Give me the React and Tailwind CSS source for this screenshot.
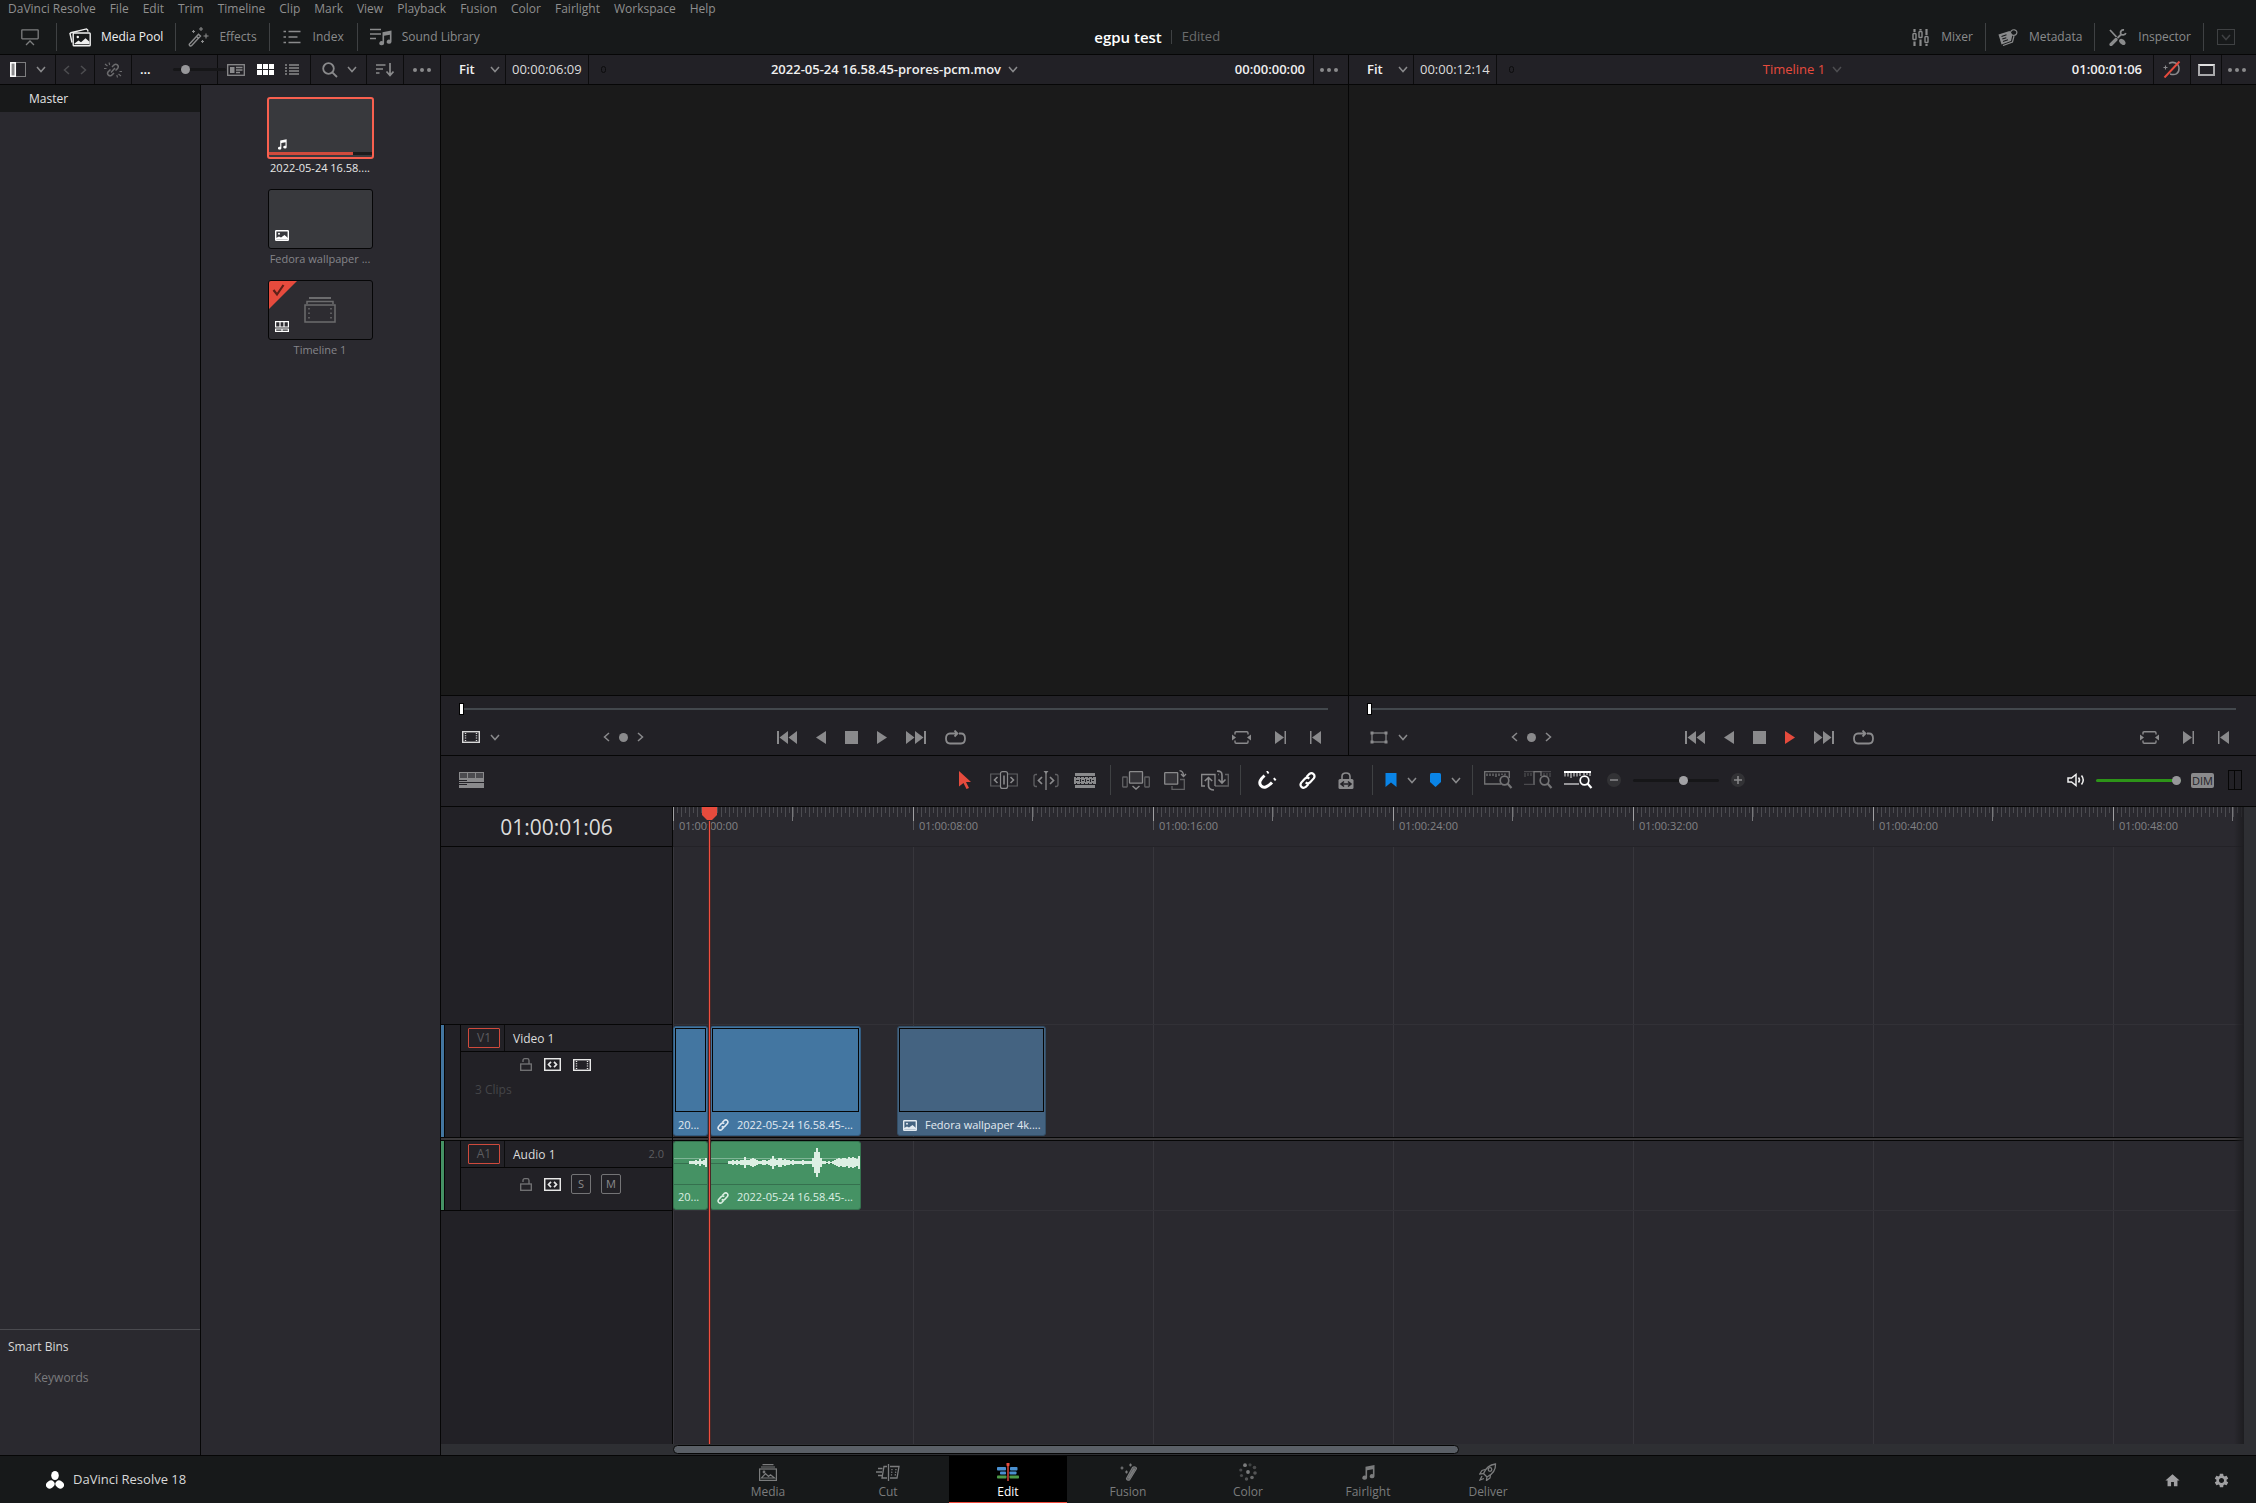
import React from 'react'
import { MdHome, MdSettings } from 'react-icons/md'
import clsx from 'clsx'

const MENU = [
  'DaVinci Resolve', 'File', 'Edit', 'Trim', 'Timeline', 'Clip', 'Mark', 'View',
  'Playback', 'Fusion', 'Color', 'Fairlight', 'Workspace', 'Help',
]

const RULER = [
  '01:00:00:00', '01:00:08:00', '01:00:16:00', '01:00:24:00',
  '01:00:32:00', '01:00:40:00', '01:00:48:00',
]

// half heights of the waveform, one value per 2px column
const WAVE_SHORT = [1, 1, 1, 2, 1, 3, 1, 2, 4]
const WAVE_LONG = [
  1, 1, 2, 1, 2, 1, 2, 2, 5, 2, 2, 3, 4, 3, 2, 1, 1, 2, 2, 1, 2, 3, 6, 3, 2,
  4, 4, 2, 3, 2, 2, 1, 2, 1, 1, 1, 1, 2, 1, 1, 1, 1, 4, 10, 14, 10, 4, 1, 1, 0, 1, 0, 1,
  2, 3, 4, 3, 4, 4, 3, 5, 4, 5, 4, 3, 6,
]

/* ---------- icons ---------- */

function Svg({ w, h, className, children, sw = 1.5, fill = 'none' }) {
  return (
    <svg
      width={w}
      height={h}
      viewBox={`0 0 ${w} ${h}`}
      fill={fill}
      stroke={fill === 'none' ? 'currentColor' : 'none'}
      strokeWidth={sw}
      className={clsx('shrink-0', className)}
      aria-hidden="true"
    >
      {children}
    </svg>
  )
}

const Chevron = ({ className }) => (
  <Svg w={10} h={7} className={className}><path d="M1 1l4 4.5L9 1" /></Svg>
)

const Less = ({ className }) => (
  <Svg w={7} h={10} className={className}><path d="M6 1L1.5 5 6 9" /></Svg>
)

const Greater = ({ className }) => (
  <Svg w={7} h={10} className={className}><path d="M1 1l4.5 4L1 9" /></Svg>
)

const Dots = () => (
  <Svg w={18} h={4} fill="currentColor">
    <circle cx="2" cy="2" r="2" /><circle cx="9" cy="2" r="2" /><circle cx="16" cy="2" r="2" />
  </Svg>
)

const PresentIcon = () => (
  <Svg w={18} h={17} sw={1.3}>
    <rect x="0.8" y="0.8" width="16.4" height="9" rx="0.5" />
    <path d="M5 16l4-4 4 4" />
  </Svg>
)

const MediaPoolIcon = () => (
  <Svg w={22} h={19} sw={1.4}>
    <path d="M3 14.5L1 5.500l1-.8L17.500 .9l1.200 1.100 .3 1.700" />
    <rect x="4.2" y="5" width="17" height="12.8" rx="0.8" />
    <circle cx="8.8" cy="9" r="1.2" fill="currentColor" stroke="none" />
    <path d="M5.5 15.5l4-3 2.500 1.700 4.500-4 4 3.500v2.500h-15z" fill="currentColor" stroke="none" />
  </Svg>
)

const EffectsIcon = () => (
  <Svg w={21} h={20} sw={1.4}>
    <path d="M1.500 17L10.500 7.200l2 1.800L3.500 18.800c-1 .8-3-.6-2-1.800z" />
    <path d="M8.500 9.500l2 1.800" />
    <path d="M13 0v4M11 2h4M18 6.500v5M15.500 9h5M5.500 3v3M4 4.500h3M14.500 13v3M13 14.500h3" strokeWidth="1.100" />
  </Svg>
)

const IndexIcon = () => (
  <Svg w={18} h={14} sw={1.6}>
    <path d="M0.500 1.500h2.500M5.500 1.500h12M0.500 7h2.500M5.500 7h9M0.500 12.500h2.500M5.500 12.500h12" />
  </Svg>
)

const Note = ({ w = 14, h = 15, className }) => (
  <svg width={w} height={h} viewBox="0 0 14 15" fill="currentColor" className={className} aria-hidden="true">
    <path d="M4.500 1.800L13.500 0v11.200a2.400 2 0 1 1-1.600-1.900V4.200L6.100 5.300v7.400a2.400 2 0 1 1-1.600-1.900z" />
  </svg>
)

const SoundIcon = () => (
  <span className="relative block h-[18px] w-[22px] shrink-0">
    <Svg w={12} h={12} sw={1.5} className="block"><path d="M0 1.500h11M0 6h11M0 10.500h6" /></Svg>
    <Note w={14} h={16} className="absolute right-0 bottom-0" />
  </span>
)

const MixerIcon = () => (
  <Svg w={17} h={17} sw={1.4}>
    <path d="M2.500 0v3M2.500 12.500V17M8.500 0v1.500M8.500 10.500V17M14.500 0v6M14.500 15v2" strokeWidth="2.200" />
    <rect x="1" y="4.500" width="3" height="6" rx="0.800" />
    <rect x="7" y="2.500" width="3" height="6" rx="0.800" />
    <rect x="13" y="7.500" width="3" height="6" rx="0.800" />
  </Svg>
)

const MetadataIcon = () => (
  <Svg w={20} h={17} sw={1.2}>
    <path d="M0.500 5.500L11.500 2l3 3.500L13 12 3.500 15.500z" fill="currentColor" stroke="none" />
    <path d="M3.500 7.500l5-1.700M4.300 10l4-1.300M5 12.500l5-1.700" stroke="#17191a" strokeWidth="1.100" />
    <path d="M5 16.500l9.500-3.500 1.500-6" />
    <path d="M12 5.500c0-3 2-5 4.500-4.700s3 3.200 1.500 4.700-3.500 1-4 .2" />
  </Svg>
)

const InspectorIcon = () => (
  <Svg w={18} h={17} sw={1.8}>
    <path d="M1 1l6.500 7" />
    <path d="M10.500 10.500c1.500-1.500 3-.8 4.500 .5 1.500 1.400 2.200 3.500 1 4.600-1.200 1-3.200 .4-4.500-1-1.200-1.400-2.200-2.800-1-4.100z" fill="currentColor" stroke="none" />
    <path d="M2 15.500l5-5" strokeWidth="3.200" strokeLinecap="round" />
    <path d="M8.500 9l3.500-3.500" />
    <path d="M15 1c-2.300-.4-4 1.300-3.200 3.600 .9 1.900 4.200 1.900 5-.6" />
  </Svg>
)

const UnlinkIcon = () => (
  <Svg w={18} h={16} sw={1.5}>
    <path d="M8 5l2.200-2.200c2-1.600 5.200 .8 3.600 3.400L11.500 8.500M10 11l-2.500 2.300c-2 1.500-5-.8-3.500-3.300L6.500 7.500M7 10.500l4-4.500" />
    <path d="M5 0.500l.7 2.500M1 2l2.500 2M0 6.500h2.500M13.500 15.500l-.7-2.500M17 14l-2.500-2M18 9.500h-2.500" strokeWidth="1.100" />
  </Svg>
)

const MetaViewIcon = () => (
  <Svg w={18} h={12} sw={1.3}>
    <rect x="0.7" y="0.7" width="16.6" height="10.6" />
    <rect x="3" y="3" width="4.5" height="6" fill="currentColor" stroke="none" />
    <path d="M9 3.500h6.500M9 6h6.500M9 8.500h4" />
  </Svg>
)

const GridIcon = () => (
  <Svg w={17} h={11} fill="currentColor">
    <path d="M0 0h5v5H0zM6 0h5v5H6zM12 0h5v5h-5zM0 6h5v5H0zM6 6h5v5H6zM12 6h5v5h-5z" />
  </Svg>
)

const ListIcon = () => (
  <Svg w={14} h={11} sw={1.3}>
    <path d="M0 1h2M4 1h10M0 4h2M4 4h10M0 7h2M4 7h10M0 10h2M4 10h10" />
  </Svg>
)

const SearchIcon = () => (
  <Svg w={16} h={16} sw={1.8}>
    <circle cx="6.5" cy="6.5" r="5.3" /><path d="M10.300 10.300l4.700 4.700" />
  </Svg>
)

const SortIcon = () => (
  <Svg w={18} h={14} sw={1.7}>
    <path d="M0 2h9.500M0 6h7M0 10h3.500M14 0v12M10.500 8.500l3.500 4 3.500-4" />
  </Svg>
)

const SidebarIcon = () => (
  <Svg w={16} h={15} sw={1}>
    <rect x="0.5" y="0.5" width="15" height="14" stroke="#7d7d7f" />
    <rect x="0.8" y="0.8" width="4.5" height="13.4" fill="#8a8a8c" stroke="#fff" strokeWidth="1.5" />
  </Svg>
)

const PictureIcon = ({ className }) => (
  <Svg w={14} h={11} sw={1.4} className={className}>
    <rect x="0.7" y="0.7" width="12.6" height="9.6" rx="0.5" />
    <circle cx="4" cy="3.8" r="1" fill="currentColor" stroke="none" />
    <path d="M1 9.500V8l3-1.500 2 1 3.500-2.500L13 8v1.500z" fill="currentColor" stroke="none" />
  </Svg>
)

const FilmIcon = () => (
  <Svg w={18} h={12} sw={1.4}>
    <rect x="0.7" y="0.7" width="16.6" height="10.6" />
    <path d="M3.500 2v8M14.500 2v8" strokeDasharray="1 1.3" />
  </Svg>
)

const FrameIcon = () => (
  <Svg w={18} h={13} sw={1.2}>
    <rect x="2" y="2" width="14" height="9" />
    <path d="M.5 .5h3v3h-3zM14.500 .5h3v3h-3zM.5 9.500h3v3h-3zM14.500 9.500h3v3h-3z" fill="currentColor" stroke="none" />
  </Svg>
)

const LoopIcon = () => (
  <Svg w={21} h={15} sw={1.8}>
    <path d="M7 3.500H5C2.500 3.500 1 5.500 1 8.500s1.500 5 4 5h11c2.500 0 4-2 4-5s-1.500-5-4-5h-2" />
    <path d="M7 3.500h5M9.500 .5l3 3-3 3" />
  </Svg>
)

const FirstIcon = () => (
  <Svg w={20} h={13} fill="currentColor"><path d="M0 0h2v13H0zM11 0v13L2.500 6.500zM20 0v13l-8.500-6.500z" /></Svg>
)
const LastIcon = () => (
  <Svg w={20} h={13} fill="currentColor"><path d="M18 0h2v13h-2zM9 0v13l8.500-6.500zM0 0v13l8.500-6.500z" transform="translate(0 0)" /></Svg>
)
const PlayIcon = () => <Svg w={10} h={13} fill="currentColor"><path d="M0 0l10 6.500L0 13z" /></Svg>
const ReverseIcon = () => <Svg w={10} h={13} fill="currentColor"><path d="M10 0v13L0 6.500z" /></Svg>
const StopIcon = () => <Svg w={13} h={13} fill="currentColor"><path d="M0 0h13v13H0z" /></Svg>
const MarkInIcon = () => <Svg w={11} h={13} fill="currentColor"><path d="M9.500 0H11v13H9.500zM0 0l9 6.500L0 13z" /></Svg>
const MarkOutIcon = () => <Svg w={11} h={13} fill="currentColor"><path d="M0 0h1.500v13H0zM11 0v13L2 6.500z" /></Svg>
const MatchIcon = () => (
  <Svg w={19} h={13} sw={1.4}>
    <path d="M3 3.500V2q0-1.200 1.200-1.200h10.600Q16 .8 16 2v1.500M3 9.500V11q0 1.200 1.200 1.200h10.600Q16 12.200 16 11V9.500" />
    <path d="M0 3.500l4 3-4 3zM19 3.500l-4 3 4 3z" fill="currentColor" stroke="none" />
  </Svg>
)

const NoGradeIcon = () => (
  <Svg w={18} h={17} sw={1.5}>
    <path d="M6 2.500c4-2.500 10-.5 10 5s-4 7-9 5.500" />
    <path d="M2.500 4.500v4M.5 6.500h4" strokeWidth="1.100" />
    <path d="M1.500 16.500L16.500 .5" stroke="#e64b3d" strokeWidth="2" />
  </Svg>
)

const TimelineViewIcon = () => (
  <Svg w={25} h={16} fill="currentColor">
    <path d="M0 0h25v10H0zM0 11h25v5H0z" />
    <path d="M1 1h7v5H1zM9 1h7v5H9zM17 1h7v5h-7z" fill="#4b4b4f" />
    <path d="M0 8h8v1H0zM0 12h8v1H0z" fill="#222126" />
  </Svg>
)

const ArrowIcon = () => <Svg w={12} h={18} fill="currentColor"><path d="M0 0l12 11H7l3 6-2.500 1-3-6L0 15.500z" /></Svg>

const TrimIcon = () => (
  <Svg w={28} h={18} sw={1.2}>
    <path d="M10 3H.7v12H10M18 3h9.300v12H18" className="opacity-60" />
    <rect x="10.5" y="0.6" width="7" height="16.8" rx="2" />
    <path d="M14 4.500v9" strokeWidth="1.600" />
    <path d="M7.500 6L4.500 9l3 3M20.500 6l3 3-3 3" strokeWidth="1.600" />
  </Svg>
)

const DynamicTrimIcon = () => (
  <Svg w={26} h={19} sw={1.3}>
    <path d="M4 3.500H3Q1 3.500 1 5.500v8q0 2 2 2h1M22 3.500h1q2 0 2 2v8q0 2-2 2h-1" className="opacity-60" />
    <path d="M13 1v18" />
    <path d="M10.500 0h5L13 3z" fill="currentColor" stroke="none" />
    <path d="M9 6L5.500 9.500 9 13M17 6l3.500 3.500L17 13" strokeWidth="1.700" />
  </Svg>
)

const BladeIcon = () => (
  <Svg w={22} h={15} fill="currentColor">
    <path d="M1 0h20v3H1zM1 12h20v3H1zM0 4h22v7H0z" />
    <path d="M2 4h1v1H2zM6 4h1v1H6zM10 4h1v1h-1zM14 4h1v1h-1zM18 4h1v1h-1zM2 10h1v1H2zM6 10h1v1H6zM10 10h1v1h-1zM14 10h1v1h-1zM18 10h1v1h-1z" fill="#222126" />
    <path d="M2 7h3v1H2zM6 6h1v3H6zM8 7h2v1H8zM11 6h1v3h-1zM13 7h2v1h-2zM16 6h1v3h-1zM18 7h2v1h-2z" fill="#222126" />
  </Svg>
)

const InsertIcon = () => (
  <Svg w={28} h={19} sw={1.3}>
    <rect x="0.7" y="6" width="4.5" height="10" rx="0.5" className="opacity-60" />
    <rect x="22.8" y="6" width="4.5" height="10" rx="0.5" className="opacity-60" />
    <rect x="7.5" y="0.7" width="13" height="11.5" rx="0.5" fill="#343338" />
    <path d="M10.500 15l3.500 3 3.500-3" strokeWidth="1.500" />
  </Svg>
)

const OverwriteIcon = () => (
  <Svg w={23} h={20} sw={1.3}>
    <path d="M16 9.500h4.300v9.800H8V16" className="opacity-60" />
    <rect x="0.7" y="2.7" width="13" height="11.5" rx="0.5" fill="#343338" />
    <path d="M15.500 .7q4 .3 4 5.500M17 4l2.500 2.500L22 4" />
  </Svg>
)

const ReplaceIcon = () => (
  <Svg w={28} h={21} sw={1.3}>
    <path d="M4 16H.7V4.500H14V16" />
    <path d="M17 4.500h1M24 4.500h3.300V16H14" className="opacity-60" />
    <path d="M7.500 8.500v8q1 3.500 5.500 3.500M3.800 11l3.700-3.500L11.200 11" strokeWidth="1.600" />
    <path d="M16 1.200q5-.5 5 4v7M17.500 9.500l3.500 3.500 3.500-3.500" strokeWidth="1.600" />
  </Svg>
)

const MagnetIcon = () => (
  <Svg w={19} h={18} sw={3}>
    <path d="M6.500 4.500C2 8.500 .5 12 3 14.800s6.500 1.400 11-3.300" />
    <path d="M9 1.800l1.500-1M16 8.800l1.500-1.200" />
  </Svg>
)

const LinkIcon = ({ size = 17, className }) => (
  <svg width={size} height={size} viewBox="0 0 17 17" fill="none" stroke="currentColor" strokeWidth="2.200" className={clsx('shrink-0', className)} aria-hidden="true">
    <path d="M7.500 5l2.700-2.900q2.400-1.800 4.300 0t.2 4.300l-3.700 4q-2.200 1.900-4.300 0" />
    <path d="M9.500 12l-2.700 2.900q-2.400 1.800-4.300 0t-.2-4.300l3.700-4q2.200-1.900 4.300 0" />
  </svg>
)

const LockArrowIcon = () => (
  <Svg w={16} h={17} sw={1.6}>
    <path d="M4 7V4.500Q4 1 8 1t4 3.500V7" />
    <rect x="0.5" y="7" width="15" height="10" rx="1.5" fill="currentColor" stroke="none" />
    <path d="M3.500 12h9M6 9.500L3 12l3 2.500M10 9.500l3 2.500-3 2.500" stroke="#222126" />
  </Svg>
)

const FlagIcon = () => <Svg w={12} h={14} fill="#0a84e6"><path d="M.5 0h11v14L6 9.500 .5 14z" /></Svg>
const MarkerIcon = () => <Svg w={11} h={14} fill="#0a84e6"><path d="M1.500 0h8Q11 0 11 1.500V9l-5.500 5L0 9V1.500Q0 0 1.500 0z" /></Svg>

function ZoomIcon({ variant }) {
  return (
    <Svg w={29} h={18} sw={1.3}>
      {variant === 'full' && <path d="M17 13H.7V.7h24.600V7" />}
      {variant === 'full' && <path d="M3 5V2.500M6 5V2.500M9 5V2.500M12 6V2.500M15 5V2.500M18 4V2.500M21 4V2.500" />}
      {variant === 'detail' && <path d="M10 14V.7h7V5" />}
      {variant === 'detail' && <path d="M0 .7h27M1 6V2M4 5V2M7 5V2M20 5V2M23 5V2M26 6V2M0 13.300h9" className="opacity-50" />}
      {variant === 'custom' && <path d="M0 1h27" strokeWidth="2" />}
      {variant === 'custom' && <path d="M1 5.500V2M4 5.500V2M7 7V2M10 5.500V2M13 5.500V2M16 5V2M20 4V2M23 4V2M26 5V2M0 13h15" className="opacity-70" />}
      <circle cx="20.5" cy="9.5" r="4.3" fill="#222126" strokeWidth="1.700" />
      <path d="M23.500 12.500l4 4.500" strokeWidth="2.200" />
    </Svg>
  )
}

const SpeakerIcon = () => (
  <Svg w={19} h={14} sw={1.5}>
    <path d="M1 5v4h3.500L9 12.500v-11L4.500 5z" />
    <path d="M11.500 4.500q2 2.500 0 5M14.500 2.500q3.500 4.500 0 9" />
  </Svg>
)

const UnlockIcon = () => (
  <Svg w={12} h={13} sw={1.3}>
    <rect x="0.7" y="6" width="10.6" height="6.3" /><path d="M3 4V2.500Q3 .7 4.800 .7h2.400Q9 .7 9 2.500V6" />
  </Svg>
)

const AutoSelectIcon = () => (
  <Svg w={17} h={13} sw={1.5}>
    <rect x="0.7" y="0.7" width="15.6" height="11.6" />
    <path d="M7 3.800L4.500 6.500 7 9.200M10 3.800l2.500 2.700L10 9.200" strokeWidth="1.700" />
  </Svg>
)

const TimelineStackIcon = () => (
  <Svg w={32} h={26} sw={1.5}>
    <path d="M5 1h22" strokeWidth="2" /><path d="M3 7V4.500h26V7" />
    <rect x="1" y="8" width="30" height="17" />
    <path d="M5 11v12M27 11v12" strokeDasharray="1.5 3" />
  </Svg>
)

const TimelineBadgeIcon = ({ className }) => (
  <Svg w={14} h={11} sw={1.2} className={className}>
    <path d="M.6 .6h12.800v5.400H.6zM5 .6V6M9 .6V6M.6 8h12.800v2.400H.6zM7 8v2.400" />
  </Svg>
)

const ResolveLogo = () => (
  <Svg w={18} h={18} fill="#fff">
    <ellipse cx="9" cy="4.5" rx="3.8" ry="4.5" />
    <ellipse cx="4.3" cy="13.5" rx="4.5" ry="3.7" transform="rotate(-35 4.3 13.5)" />
    <ellipse cx="13.7" cy="13.5" rx="4.5" ry="3.7" transform="rotate(35 13.7 13.5)" />
  </Svg>
)

const PAGE_ICONS = {
  Media: (
    <Svg w={18} h={17} sw={1.2}>
      <path d="M3.500 .6h11M2 3h14" /><rect x="0.6" y="5" width="16.8" height="11.4" />
      <path d="M2.500 14l4-4.500 3 3 2-1.800 4 3.300z" /><circle cx="5" cy="8" r="0.8" />
    </Svg>
  ),
  Cut: (
    <Svg w={24} h={17} sw={1.3}>
      <path d="M11 2.500H8L6 14H11M14 2.500h9L21 14H14M12.500 0v17" />
      <path d="M2 4.500h4.500M0 8h6M2 11.500h4" /><path d="M16 5l-.6 7M20 5l-.8 7" strokeDasharray="1.3 1.3" />
    </Svg>
  ),
  Edit: (
    <Svg w={22} h={18} fill="#4a90d0">
      <rect x="0" y="4" width="9" height="3.5" rx="0.8" /><rect x="13" y="4" width="7.5" height="3.5" rx="0.8" />
      <rect x="3" y="8.5" width="6" height="3" rx="0.8" /><rect x="12.5" y="8.5" width="7" height="3" rx="0.8" />
      <rect x="0" y="12.5" width="9.5" height="3" rx="0.8" fill="#4c9a48" /><rect x="12.5" y="12.5" width="9.5" height="3" rx="0.8" fill="#4c9a48" />
      <path d="M9.500 0h3v2.500l-.8 .8V18h-1.400V3.300l-.8-.8z" fill="#e64b3d" />
    </Svg>
  ),
  Fusion: (
    <Svg w={18} h={18} sw={1.2}>
      <path d="M7.500 15.500L13.500 4.500q1.500-1.500 3.500 0 .8 1 0 2L10.500 17q-2.500 .8-3-1.500z" fill="#555759" />
      <path d="M15.500 5.500L9.500 15.500" strokeWidth="1.800" />
      <path d="M3 3.500v3M1.500 5h3M7.500 7.500v3M6 9h3M11.500 .5v3M10 2h3" />
    </Svg>
  ),
  Color: (
    <Svg w={18} h={18} fill="currentColor">
      <circle cx="9" cy="9" r="1.9" /><circle cx="6" cy="2.2" r="1.9" /><circle cx="11" cy="1.8" r="1.6" className="opacity-40" />
      <circle cx="15.5" cy="4.5" r="1.8" className="opacity-50" /><circle cx="16" cy="10" r="1.8" className="opacity-60" />
      <circle cx="13" cy="14.5" r="1.8" className="opacity-80" /><circle cx="7.5" cy="16" r="1.7" className="opacity-60" />
      <circle cx="2.5" cy="12.5" r="1.6" className="opacity-50" /><circle cx="1.8" cy="7" r="1.6" className="opacity-50" />
    </Svg>
  ),
  Fairlight: <Note w={14} h={15} />,
  Deliver: (
    <Svg w={18} h={18} sw={1.3}>
      <path d="M4.500 10.500Q8 2 16.500 1q.5 8.500-8.500 13z" /><circle cx="11" cy="6.5" r="1.8" />
      <path d="M6 6.500L3 7.500 .7 11l3.500-.3M11.500 11.500L11 15l-3.500 2.500 .3-3.300M3 13l-2 4 4-1.500" />
    </Svg>
  ),
}

/* ---------- shared bits ---------- */

function IconButton({ label, className, children }) {
  return (
    <button type="button" aria-label={label} className={clsx('flex items-center justify-center shrink-0', className)}>
      {children}
    </button>
  )
}

const Rule = ({ className }) => <span className={clsx('w-px shrink-0 bg-[#3f4143]', className)} />

function HeaderButton({ icon, label, active, className }) {
  return (
    <button type="button" className={clsx('flex items-center', active ? 'text-[#f0f0f0]' : 'text-[#8a8b8c]', className)}>
      {icon}
      <span>{label}</span>
    </button>
  )
}

/* ---------- header ---------- */

function MenuBar() {
  return (
    <nav className="flex h-[18px] items-center gap-[14px] px-2 text-[#8f8f8f]">
      {MENU.map((item) => (
        <button type="button" key={item}>{item}</button>
      ))}
    </nav>
  )
}

function Header() {
  return (
    <header className="grid h-[37px] grid-cols-[1fr_auto_1fr] items-center border-b border-[#060606] pt-0.5">
      <div className="flex items-center">
        <IconButton label="Presentation" className="w-14 pl-1 text-[#7d7e7f]"><PresentIcon /></IconButton>
        <Rule className="h-7" />
        <HeaderButton icon={<MediaPoolIcon />} label="Media Pool" active className="gap-2.5 px-3" />
        <Rule className="h-7" />
        <HeaderButton icon={<EffectsIcon />} label="Effects" className="gap-2.5 px-3" />
        <Rule className="h-7" />
        <HeaderButton icon={<IndexIcon />} label="Index" className="gap-3 px-[13px]" />
        <Rule className="h-7" />
        <HeaderButton icon={<SoundIcon />} label="Sound Library" className="gap-2.5 px-3" />
      </div>
      <h1 className="text-[15px] font-semibold text-white">egpu test</h1>
      <div className="flex items-center">
        <Rule className="ml-[9px] h-[14px]" />
        <span className="ml-2.5 text-[13px] text-[#6a6b6c]">Edited</span>
        <HeaderButton icon={<MixerIcon />} label="Mixer" className="ml-auto gap-3 px-3" />
        <Rule className="h-7" />
        <HeaderButton icon={<MetadataIcon />} label="Metadata" className="gap-[11px] px-3" />
        <Rule className="h-7" />
        <HeaderButton icon={<InspectorIcon />} label="Inspector" className="gap-[11px] pl-[14px] pr-3" />
        <Rule className="h-7" />
        <IconButton label="More panels" className="ml-[13px] mr-[21px] h-4 w-[18px] border border-[#3f4143] text-[#3f4143]">
          <Chevron />
        </IconButton>
      </div>
    </header>
  )
}

/* ---------- media pool ---------- */

const cell = 'flex h-full shrink-0 items-center border-r border-[#0c0c0d]'

function MediaToolbar() {
  return (
    <div className="flex h-[30px] border-b border-[#060606] bg-[#222126] text-[#8a8a8c]">
      <div className={clsx(cell, 'w-14 gap-2.5 pl-2.5')}>
        <IconButton label="Toggle bins"><SidebarIcon /></IconButton>
        <IconButton label="Bin options"><Chevron /></IconButton>
      </div>
      <div className={clsx(cell, 'w-[39px] justify-center gap-2.5 text-[#4d4d50]')}>
        <IconButton label="Back"><Less /></IconButton>
        <IconButton label="Forward"><Greater /></IconButton>
      </div>
      <IconButton label="Unlink" className={clsx(cell, 'w-[37px] text-[#6c6c6e]')}><UnlinkIcon /></IconButton>
      <div className={clsx(cell, 'w-[86px] gap-[22px] pl-2')}>
        <span className="text-[13px] font-semibold text-white">...</span>
        <input
          type="range"
          aria-label="Thumbnail size"
          defaultValue={20}
          className="h-3 w-[53px] shrink-0 appearance-none bg-transparent [&::-webkit-slider-runnable-track]:h-[3px] [&::-webkit-slider-runnable-track]:rounded-full [&::-webkit-slider-runnable-track]:bg-[#161618] [&::-webkit-slider-thumb]:-mt-[3px] [&::-webkit-slider-thumb]:size-[9px] [&::-webkit-slider-thumb]:appearance-none [&::-webkit-slider-thumb]:rounded-full [&::-webkit-slider-thumb]:bg-[#97979a]"
        />
      </div>
      <div className={clsx(cell, 'w-[93px] justify-between pl-[9px] pr-[11px]')}>
        <IconButton label="Metadata view"><MetaViewIcon /></IconButton>
        <IconButton label="Thumbnail view" className="text-white"><GridIcon /></IconButton>
        <IconButton label="List view"><ListIcon /></IconButton>
      </div>
      <div className={clsx(cell, 'w-14 justify-between pl-[11px] pr-[9px]')}>
        <IconButton label="Search"><SearchIcon /></IconButton>
        <IconButton label="Search options"><Chevron /></IconButton>
      </div>
      <IconButton label="Sort" className={clsx(cell, 'w-[37px]')}><SortIcon /></IconButton>
      <IconButton label="Media pool options" className="w-9"><Dots /></IconButton>
    </div>
  )
}

function Thumb({ label, selected, children }) {
  return (
    <figure className="flex h-[91px] flex-col items-center">
      <div className="flex h-[62px] items-center">
        <div
          className={clsx(
            'relative flex items-center justify-center overflow-hidden rounded-[3px]',
            selected ? 'h-[62px] w-[107px] border-2 border-[#f9604f]' : 'h-[60px] w-[105px] border border-[#060607]',
            label === 'Timeline 1' ? 'bg-[#2d2c31]' : 'bg-[#38393d]',
          )}
        >
          {children}
        </div>
      </div>
      <figcaption className={clsx('mt-px text-[11px] leading-4', selected ? 'text-[#e8e8e8]' : 'text-[#85858a]')}>
        {label}
      </figcaption>
    </figure>
  )
}

function MediaPool() {
  return (
    <section className="flex w-[441px] shrink-0 flex-col border-r border-[#060606] bg-[#2a292f]">
      <MediaToolbar />
      <div className="flex min-h-0 flex-1">
        <aside className="flex w-[201px] shrink-0 flex-col border-r border-[#060606]">
          <button type="button" className="h-[27px] bg-[#18191a] pt-px pl-[29px] text-left text-[#e3e3e3]">Master</button>
          <div className="mt-auto h-[126px] border-t border-[#4a4a4f] pt-[7px]">
            <h2 className="pl-2 leading-5 text-[#d8d8d8]">Smart Bins</h2>
            <button type="button" className="mt-[11px] block pl-[34px] leading-5 text-[#7b7b7e]">Keywords</button>
          </div>
        </aside>
        <div className="flex-1 pt-3 pr-px">
          <Thumb label="2022-05-24 16.58...." selected>
            <Note w={10} h={11} className="absolute bottom-[7px] left-2 text-white" />
            <span className="absolute inset-x-0 bottom-0.5 flex h-[3px] bg-[#1b1b1c]">
              <span className="w-[82%] bg-[#d04a3c]" />
            </span>
          </Thumb>
          <Thumb label="Fedora wallpaper ...">
            <PictureIcon className="absolute bottom-[7px] left-1.5 text-white" />
          </Thumb>
          <Thumb label="Timeline 1">
            <Svg w={28} h={28} fill="#e64b3d" className="absolute top-0 left-0">
              <path d="M0 0h28L0 28z" />
              <path d="M4.500 9l3.500 4.500L14.500 4" fill="none" stroke="#5e2019" strokeWidth="2.200" />
            </Svg>
            <span className="text-[#6c6c6e]"><TimelineStackIcon /></span>
            <TimelineBadgeIcon className="absolute bottom-[7px] left-1.5 text-white" />
          </Thumb>
        </div>
      </div>
    </section>
  )
}

/* ---------- viewers ---------- */

function Viewer({ duration, title, timecode, timeline }) {
  return (
    <section className={clsx('flex min-w-0 flex-1 flex-col', !timeline && 'border-r border-[#060606]')}>
      <div className="grid h-[30px] shrink-0 grid-cols-[1fr_auto_1fr] border-b border-[#060606] bg-[#222126] text-[13px] text-[#8a8a8c]">
        <div className="flex items-center">
          <label className={clsx(cell, 'relative w-[65px]')}>
            <select aria-label="Viewer zoom" className="h-full w-full appearance-none bg-transparent pl-[18px] font-semibold text-[#f0f0f0]">
              <option>Fit</option>
            </select>
            <Chevron className="pointer-events-none absolute right-[5px]" />
          </label>
          <span className={clsx(cell, 'w-[83px] pl-1.5 text-[#dcdcdc]')}>{duration}</span>
          <span className="ml-3 h-[7px] w-[5px] rounded-full border border-[#0c0c0d]" />
        </div>
        <button
          type="button"
          className={clsx('flex items-center gap-[7px]', timeline ? 'font-medium text-[#e64b3d]' : 'font-semibold text-[#f0f0f0]')}
        >
          {title}
          <Chevron className={timeline ? 'text-[#4d4d50]' : 'text-[#8a8a8c]'} />
        </button>
        <div className="flex items-center justify-end">
          <span className={clsx(cell, 'pr-2 font-semibold text-[#f0f0f0]', timeline && 'pr-[11px]')}>{timecode}</span>
          {timeline && (
            <>
              <IconButton label="Bypass color grades" className={clsx(cell, 'w-[37px]')}><NoGradeIcon /></IconButton>
              <IconButton label="Single viewer" className={clsx(cell, 'w-[31px]')}>
                <span className="h-3 w-[17px] border-2 border-[#a9a9ab] border-t-[#e0e0e0]" />
              </IconButton>
            </>
          )}
          <IconButton label="Viewer options" className="w-[34px] pr-1"><Dots /></IconButton>
        </div>
      </div>
      <div className="h-[610px] bg-[#1a1a1a]" />
      <div className="h-[61px] border-y border-[#060606] bg-[#222126] pr-5 pl-[18px] text-[#8a8a8c]">
        <input
          type="range"
          aria-label="Scrub"
          defaultValue={0}
          className="mt-[7px] block h-3 w-full appearance-none bg-transparent [&::-webkit-slider-runnable-track]:h-0.5 [&::-webkit-slider-runnable-track]:bg-[#43484d] [&::-webkit-slider-thumb]:-mt-[5px] [&::-webkit-slider-thumb]:h-3 [&::-webkit-slider-thumb]:w-[5px] [&::-webkit-slider-thumb]:appearance-none [&::-webkit-slider-thumb]:border [&::-webkit-slider-thumb]:border-black [&::-webkit-slider-thumb]:bg-white"
        />
        <div className="mt-3 flex h-5 items-center pr-[7px] pl-[3px]">
          <IconButton label="Overlay mode" className={timeline ? '' : 'text-[#d8d8d8]'}>
            {timeline ? <FrameIcon /> : <FilmIcon />}
          </IconButton>
          <IconButton label="Overlay options" className="ml-2.5"><Chevron /></IconButton>
          <div className="ml-[103px] flex items-center gap-[9px]">
            <IconButton label="Previous marker"><Less /></IconButton>
            <IconButton label="Add marker" className="size-[9px] rounded-full bg-current" />
            <IconButton label="Next marker"><Greater /></IconButton>
          </div>
          <span className="flex-1" />
          <div className="flex items-center gap-[19px]">
            <IconButton label="First frame"><FirstIcon /></IconButton>
            <IconButton label="Play reverse"><ReverseIcon /></IconButton>
            <IconButton label="Stop"><StopIcon /></IconButton>
            <IconButton label="Play" className={timeline ? 'text-[#e64b3d]' : ''}><PlayIcon /></IconButton>
            <IconButton label="Last frame"><LastIcon /></IconButton>
            <IconButton label="Loop"><LoopIcon /></IconButton>
          </div>
          <span className="flex-[2]" />
          <div className="flex items-center gap-6">
            <IconButton label="Match frame"><MatchIcon /></IconButton>
            <IconButton label="Mark in"><MarkInIcon /></IconButton>
            <IconButton label="Mark out"><MarkOutIcon /></IconButton>
          </div>
        </div>
      </div>
    </section>
  )
}

/* ---------- edit toolbar ---------- */

function EditToolbar() {
  return (
    <div className="flex h-[51px] shrink-0 items-center border-b border-[#060606] bg-[#222126] pr-[14px] pb-0.5 pl-[18px] text-[#8a8a8c]">
      <IconButton label="Timeline view options"><TimelineViewIcon /></IconButton>
      <span className="flex-[3]" />
      <div className="flex items-center pr-1.5">
        <div className="flex items-center gap-[15px] pr-[14px]">
          <IconButton label="Selection mode" className="mr-1 text-[#e64b3d]"><ArrowIcon /></IconButton>
          <IconButton label="Trim edit mode"><TrimIcon /></IconButton>
          <IconButton label="Dynamic trim mode"><DynamicTrimIcon /></IconButton>
          <IconButton label="Blade edit mode"><BladeIcon /></IconButton>
        </div>
        <Rule className="h-[30px]" />
        <div className="flex items-center gap-[14px] px-[11px]">
          <IconButton label="Insert clip"><InsertIcon /></IconButton>
          <IconButton label="Overwrite clip"><OverwriteIcon /></IconButton>
          <IconButton label="Replace clip"><ReplaceIcon /></IconButton>
        </div>
        <Rule className="h-[30px]" />
        <div className="flex items-center gap-[22px] pr-[18px] pl-[17px] text-white">
          <IconButton label="Snapping"><MagnetIcon /></IconButton>
          <IconButton label="Linked selection"><LinkIcon /></IconButton>
          <IconButton label="Position lock" className="text-[#8a8a8c]"><LockArrowIcon /></IconButton>
        </div>
        <Rule className="h-[30px]" />
        <div className="flex items-center pr-[11px] pl-3">
          <IconButton label="Flag"><FlagIcon /></IconButton>
          <IconButton label="Flag colors" className="ml-2.5"><Chevron /></IconButton>
          <IconButton label="Marker" className="ml-[13px]"><MarkerIcon /></IconButton>
          <IconButton label="Marker colors" className="ml-2.5"><Chevron /></IconButton>
        </div>
        <Rule className="h-[30px]" />
        <div className="flex items-center gap-[11px] px-[11px]">
          <IconButton label="Full extent zoom" className="text-[#747476]"><ZoomIcon variant="full" /></IconButton>
          <IconButton label="Detail zoom" className="text-[#747476]"><ZoomIcon variant="detail" /></IconButton>
          <IconButton label="Custom zoom" className="text-white"><ZoomIcon variant="custom" /></IconButton>
        </div>
        <div className="flex items-center gap-3 pl-[3px]">
          <IconButton label="Zoom out" className="size-[14px] rounded-full bg-[#323235]">
            <Svg w={8} h={8}><path d="M0 4h8" /></Svg>
          </IconButton>
          <input
            type="range"
            aria-label="Timeline zoom"
            defaultValue={60}
            className="h-3 w-[86px] appearance-none bg-transparent [&::-webkit-slider-runnable-track]:h-[3px] [&::-webkit-slider-runnable-track]:rounded-full [&::-webkit-slider-runnable-track]:bg-[#161618] [&::-webkit-slider-thumb]:-mt-[3px] [&::-webkit-slider-thumb]:size-[9px] [&::-webkit-slider-thumb]:appearance-none [&::-webkit-slider-thumb]:rounded-full [&::-webkit-slider-thumb]:bg-[#a2a2a5]"
          />
          <IconButton label="Zoom in" className="size-[14px] rounded-full bg-[#323235]">
            <Svg w={8} h={8}><path d="M0 4h8M4 0v8" /></Svg>
          </IconButton>
        </div>
      </div>
      <span className="flex-[2]" />
      <div className="flex items-center">
        <IconButton label="Mute" className="text-[#f0f0f0]"><SpeakerIcon /></IconButton>
        <input
          type="range"
          aria-label="Volume"
          defaultValue={100}
          className="ml-2.5 h-3 w-[85px] appearance-none bg-transparent [&::-webkit-slider-runnable-track]:h-[3px] [&::-webkit-slider-runnable-track]:rounded-full [&::-webkit-slider-runnable-track]:bg-[#2d9418] [&::-webkit-slider-thumb]:-mt-[3px] [&::-webkit-slider-thumb]:size-[9px] [&::-webkit-slider-thumb]:appearance-none [&::-webkit-slider-thumb]:rounded-full [&::-webkit-slider-thumb]:bg-[#97979a]"
        />
        <button type="button" className="ml-2.5 h-[15px] w-[23px] rounded-[2px] bg-[#8a8a8c] text-[11px] leading-[15px] text-[#222126]">DIM</button>
        <span className="ml-[14px] flex h-5 w-[14px] border border-[#060606]">
          <span className="w-1/2 border-r border-[#060606]" />
        </span>
      </div>
    </div>
  )
}

/* ---------- timeline ---------- */

function TrackHeader({ id, name, video }) {
  return (
    <div className={clsx('flex border-[#060606]', video ? 'h-[113px] border-t' : 'h-[70px] border-b')}>
      <span className={clsx('w-1 border-r border-[#060606]', video ? 'bg-[#4376a1]' : 'bg-[#459264]')} />
      <span className="w-4 border-r border-[#060606]" />
      <div className="flex-1">
        <div className="flex h-[27px] items-center border-b border-[#060606]">
          <div className={clsx(cell, 'w-11 pl-[7px]')}>
            <button type="button" className="h-5 w-8 rounded-[1px] border border-[#d04a3c] leading-[18px] text-[#5d5d60]">{id}</button>
          </div>
          <span className="ml-2 pt-px text-[#dcdcdc]">{name}</span>
          {!video && <span className="mr-2 ml-auto pt-px text-[11px] text-[#5d5d60]">2.0</span>}
        </div>
        <div className={clsx('flex items-center pl-[59px] text-[#e8e8e8]', video ? 'h-[25px] gap-3' : 'h-8 gap-2.5')}>
          <IconButton label="Lock track" className={clsx('text-[#747476]', !video && 'mr-0.5')}><UnlockIcon /></IconButton>
          <IconButton label="Auto select"><AutoSelectIcon /></IconButton>
          {video ? (
            <IconButton label="Disable track"><FilmIcon /></IconButton>
          ) : (
            ['S', 'M'].map((key) => (
              <button type="button" key={key} className="h-5 w-5 rounded-[2px] border border-[#747476] text-[11px] leading-[18px] text-[#8a8a8c]">
                {key}
              </button>
            ))
          )}
        </div>
        {video && <p className="mt-[3px] pl-[14px] leading-5 text-[#454548]">3 Clips</p>}
      </div>
    </div>
  )
}

function Clip({ label, icon, className }) {
  return (
    <div className={clsx('flex h-[110px] shrink-0 flex-col rounded-[3px] border px-px pt-px text-[11px] text-[#e2eaf1]', className)}>
      <div className="h-[84px] border border-[#060606]" />
      <div className="flex flex-1 items-center gap-2 pt-[3px] pl-[3px] whitespace-nowrap">
        {icon}
        {label}
      </div>
    </div>
  )
}

function AudioClip({ label, icon, wave, className }) {
  return (
    <div className={clsx('flex h-[69px] shrink-0 flex-col rounded-[3px] border border-[#36734f] bg-[#459264] text-[11px] text-[#dcefe3]', className)}>
      <div className="relative flex h-[43px] justify-end border-b border-[#35704e]">
        <span className="absolute inset-x-0 top-4 h-px bg-[#7fb595]" />
        <span className="absolute inset-x-0 top-[21px] h-px bg-[#35704e]" />
        <svg width={wave.length * 2} height="42" className="relative" fill="#dcefe3" aria-hidden="true">
          {wave.map((amp, i) => (
            <rect key={i} x={i * 2} y={20 - amp} width="2" height={amp * 2 + 1} />
          ))}
        </svg>
      </div>
      <div className="flex flex-1 items-center gap-2 pt-px pl-1 whitespace-nowrap">
        {icon}
        {label}
      </div>
    </div>
  )
}

function Ruler() {
  return (
    <div className="relative h-10 overflow-hidden border-b border-[#232227]">
      <svg width="100%" height="40" className="absolute inset-0" aria-hidden="true">
        <defs>
          <pattern id="minor" width="8" height="40" patternUnits="userSpaceOnUse">
            <path d="M0 0h1v10H0zM4 0h1v6H4z" fill="#4b4b50" />
          </pattern>
          <pattern id="major" width="240" height="40" patternUnits="userSpaceOnUse">
            <path d="M119 0h1v14h-1z" fill="#77777a" />
            <path d="M0 0h1v14H0z" fill="#a0a0a3" />
            <path d="M0 14h1v9H0z" fill="#55555a" />
          </pattern>
        </defs>
        <rect width="100%" height="40" fill="url(#minor)" />
        <rect width="100%" height="40" fill="url(#major)" />
      </svg>
      <div className="relative flex pt-[11px]">
        {RULER.map((time) => (
          <span key={time} className="w-60 shrink-0 pl-1.5 text-[11px] leading-4 text-[#828285]">{time}</span>
        ))}
      </div>
    </div>
  )
}

function Timeline() {
  return (
    <section className="flex min-h-0 flex-1 flex-col">
      <div className="flex min-h-0 flex-1">
        <div className="flex w-[232px] shrink-0 flex-col border-r border-[#060606] bg-[#222126]">
          <div className="h-10 border-b border-[#060606] text-center text-[21px] leading-10 text-[#dcdcdc]">01:00:01:06</div>
          <div className="h-[177px]" />
          <TrackHeader id="V1" name="Video 1" video />
          <div className="h-1 border-y border-[#060606] bg-[#3b393b]" />
          <TrackHeader id="A1" name="Audio 1" />
        </div>
        <div className="relative flex min-w-0 flex-1 flex-col bg-[#2a292f]">
          <Ruler />
          <div className="flex-1 bg-[repeating-linear-gradient(90deg,#37363c_0_1px,transparent_1px_240px)]">
            <div className="h-[177px]" />
            <div className="flex h-[113px] border-t border-[#323137] pt-px">
              <Clip label="20..." className="w-[35px] border-[#335c80] bg-[#4376a1]" />
              <Clip label="2022-05-24 16.58.45-..." icon={<LinkIcon size={12} className="ml-0.5" />} className="ml-0.5 w-[151px] border-[#335c80] bg-[#4376a1]" />
              <Clip label="Fedora wallpaper 4k...." icon={<PictureIcon className="ml-px" />} className="ml-9 w-[149px] border-[#334e66] bg-[#446381]" />
            </div>
            <div className="h-1 border-y border-[#060606] bg-[#3b393b]" />
            <div className="flex h-[70px] border-b border-[#323137]">
              <AudioClip label="20..." wave={WAVE_SHORT} className="w-[35px]" />
              <AudioClip label="2022-05-24 16.58.45-..." icon={<LinkIcon size={12} className="ml-0.5" />} wave={WAVE_LONG} className="ml-0.5 w-[151px]" />
            </div>
          </div>
          <div className="absolute inset-y-0 left-[29px] flex w-[15px] flex-col items-center">
            <Svg w={15} h={14} fill="#e64b3d"><path d="M0 0h15v8L10 13H5L0 8z" /></Svg>
            <span className="w-[3px] flex-1 border-x border-[#4a2726] bg-[#f04f40]" />
          </div>
          <div className="absolute inset-y-0 right-0 flex w-[22px]">
            <span className="w-2.5 bg-linear-to-r from-transparent to-[#1d1d20]" />
            <span className="w-3 bg-[#2e2f33]" />
          </div>
        </div>
      </div>
      <div className="h-[11px] shrink-0 bg-[#2e2f33] pl-[232px]">
        <div className="mt-px h-[9px] w-[786px] rounded-full border border-[#060606] bg-[#5a5f66]" />
      </div>
    </section>
  )
}

/* ---------- footer ---------- */

function PageBar() {
  return (
    <footer className="grid h-12 shrink-0 grid-cols-[1fr_auto_1fr] items-center border-t border-[#060606]">
      <div className="flex items-center gap-[9px] pl-[46px] text-[13px] text-[#d8d8d8]">
        <ResolveLogo />
        DaVinci Resolve 18
      </div>
      <nav className="flex h-full">
        {Object.keys(PAGE_ICONS).map((page) => (
          <button
            type="button"
            key={page}
            className={clsx(
              'mx-px flex h-full w-[118px] flex-col items-center border-b-2 pt-[7px]',
              page === 'Edit' ? 'border-[#f04a3c] bg-black text-white' : 'border-transparent text-[#7b7c7d]',
            )}
          >
            <span className="flex h-[18px] items-center">{PAGE_ICONS[page]}</span>
            <span className="mt-px leading-5">{page}</span>
          </button>
        ))}
      </nav>
      <div className="flex items-center justify-end gap-8 pr-[26px] text-[#a0a0a2]">
        <IconButton label="Project manager"><MdHome size={17} /></IconButton>
        <IconButton label="Project settings"><MdSettings size={17} /></IconButton>
      </div>
    </footer>
  )
}

function App() {
  return (
    <div className="flex h-screen flex-col overflow-hidden bg-[#17191a] font-['Open_Sans','Noto_Sans',sans-serif] text-xs">
      <MenuBar />
      <Header />
      <main className="flex min-h-0 flex-1">
        <MediaPool />
        <div className="flex min-w-0 flex-1 flex-col">
          <div className="flex shrink-0">
            <Viewer duration="00:00:06:09" title="2022-05-24 16.58.45-prores-pcm.mov" timecode="00:00:00:00" />
            <Viewer duration="00:00:12:14" title="Timeline 1" timecode="01:00:01:06" timeline />
          </div>
          <EditToolbar />
          <Timeline />
        </div>
      </main>
      <PageBar />
    </div>
  )
}

export default App
